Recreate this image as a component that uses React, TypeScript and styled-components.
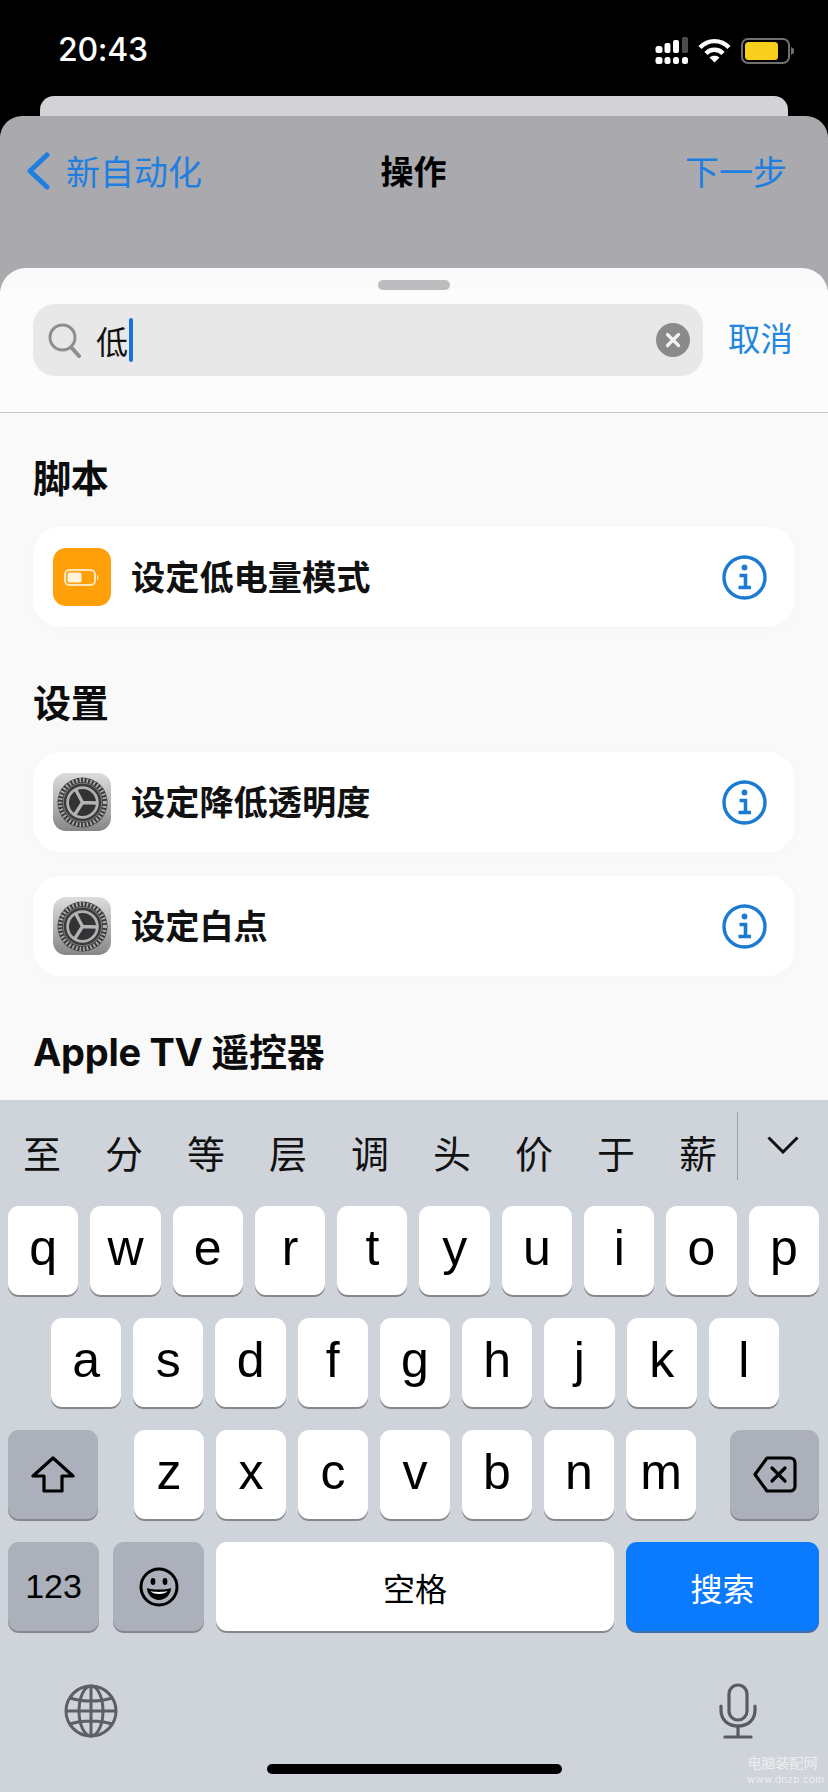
import React from 'react'
import styled, { createGlobalStyle } from 'styled-components'

const CJK = `"Noto Sans CJK SC", "Noto Sans", sans-serif`
const LATIN = `"Inter", "Liberation Sans", "Noto Sans CJK SC", sans-serif`
const KEYCAP = `"Liberation Sans", "Inter", sans-serif`

const GlobalStyle = createGlobalStyle`
  html, body { margin: 0; padding: 0; background: #000; }
  * { box-sizing: border-box; }
`

const Screen = styled.div`
  width: 828px;
  height: 1792px;
  background: #000;
  overflow: hidden;
  position: relative;
  display: flex;
  flex-direction: column;
  font-family: ${CJK};
`

const StatusBar = styled.div`
  height: 96px;
  flex: none;
  display: flex;
  align-items: flex-start;
  justify-content: space-between;
  padding: 30px 34px 0 58px;
`

const Time = styled.span`
  color: #fff;
  font-family: ${LATIN};
  font-size: 32px;
  line-height: 40px;
  font-weight: 500;
  letter-spacing: -0.3px;
`

const StatusIcons = styled.div`
  display: flex;
  align-items: center;
  margin-top: 7px;
  gap: 10px;
`

const BackCard = styled.div`
  flex: none;
  height: 20px;
  margin: 0 40px;
  background: #d2d2d7;
  border-radius: 14px 14px 0 0;
`

const GreySheet = styled.div`
  flex: none;
  height: 984px;
  background: #a9a9ae;
  border-radius: 22px 22px 0 0;
  display: flex;
  flex-direction: column;
`

const NavBar = styled.div`
  height: 152px;
  flex: none;
  display: grid;
  grid-template-columns: 264px 1fr 250px;
  align-items: start;
  padding: 30px 41px 0 26px;
  font-size: 34px;
  line-height: 50px;
`

const NavSide = styled.div<{ $end?: boolean }>`
  display: flex;
  align-items: center;
  gap: 16px;
  color: #1f7fe0;
  justify-content: ${(p) => (p.$end ? 'flex-end' : 'flex-start')};
`

const NavTitle = styled.div`
  color: #000;
  font-weight: 700;
  font-size: 33px;
  text-align: center;
  margin-top: -1px;
`

const WhiteSheet = styled.div`
  flex: 1;
  background: #fafafa;
  border-radius: 26px 26px 0 0;
  display: flex;
  flex-direction: column;
  overflow: hidden;
`

const Handle = styled.div`
  width: 72px;
  height: 10px;
  border-radius: 5px;
  background: #bcbcbe;
  margin: 12px auto 0;
  flex: none;
`

const SearchRow = styled.div`
  display: flex;
  align-items: center;
  gap: 25px;
  padding: 14px 33px 36px;
  border-bottom: 1px solid #cbcbcd;
  background: #fcfcfc;
  flex: none;
`

const SearchField = styled.div`
  width: 670px;
  height: 72px;
  background: #e8e8e9;
  border-radius: 22px;
  display: flex;
  align-items: center;
  padding: 0 13px 0 15px;
`

const SearchValue = styled.span`
  margin-left: 15px;
  font-size: 32px;
  line-height: 44px;
  color: #111;
`

const Caret = styled.span`
  width: 4px;
  height: 44px;
  margin-left: 1px;
  background: #1a73d9;
  border-radius: 2px;
  flex: none;
`

const CancelLink = styled.span`
  font-size: 32.5px;
  line-height: 44px;
  margin-top: -6px;
  color: #2486de;
  white-space: nowrap;
`

const Results = styled.div`
  flex: 1;
  padding: 45px 33px 0;
  display: flex;
  flex-direction: column;
  background: #f9f9f9;
`

const SectionTitle = styled.h2<{ $first?: boolean }>`
  margin: ${(p) => (p.$first ? '0' : '56px')} 0 29px;
  font-size: 38px;
  line-height: 40px;
  font-weight: 700;
  color: #0c0c0c;
  white-space: nowrap;
  font-family: ${LATIN};
  letter-spacing: -0.3px;
`

const ActionRow = styled.div`
  height: 100px;
  flex: none;
  background: #fff;
  border-radius: 27px;
  display: flex;
  align-items: center;
  padding: 0 28px 0 20px;
  box-shadow: 0 2px 12px rgba(0, 0, 0, 0.015);
  & + & {
    margin-top: 24px;
  }
`

const ActionLabel = styled.span`
  flex: 1;
  margin: -4px 0 0 20px;
  font-size: 34.2px;
  font-weight: 600;
  color: #111;
  white-space: nowrap;
`

const AppTile = styled.span<{ $kind: 'battery' | 'settings' }>`
  width: 58px;
  height: 58px;
  border-radius: 13px;
  flex: none;
  display: flex;
  align-items: center;
  justify-content: center;
  background: ${(p) =>
    p.$kind === 'battery' ? '#ff9f0a' : 'linear-gradient(180deg, #dcdcde 0%, #b4b4b6 50%, #868688 100%)'};
`

const Keyboard = styled.div`
  flex: none;
  height: 692px;
  background: #cfd3da;
  display: flex;
  flex-direction: column;
`

const Candidates = styled.div`
  height: 106px;
  flex: none;
  display: flex;
  align-items: center;
  padding-left: 1px;
`

const Candidate = styled.span`
  width: 82px;
  flex: none;
  text-align: center;
  font-size: 38px;
  line-height: 50px;
  margin-top: -2px;
  color: #111;
`

const CandidateDivider = styled.span`
  width: 1px;
  height: 68px;
  background: #9a9da3;
  margin: -14px 0 0 -2px;
  flex: none;
`

const CollapseButton = styled.span`
  display: flex;
  margin: -16px 0 0 29px;
`

const KeyRows = styled.div`
  display: flex;
  flex-direction: column;
  gap: 23px;
`

const KeyRow = styled.div<{ $inset?: string }>`
  display: flex;
  height: 89px;
  padding: ${(p) => p.$inset ?? '0 9px 0 8px'};
  gap: 12px;
`

const Key = styled.div<{ $tone?: 'light' | 'dark' | 'blue'; $width?: number; $lead?: number }>`
  flex: ${(p) => (p.$width ? `none` : '1 1 0')};
  width: ${(p) => (p.$width ? `${p.$width}px` : 'auto')};
  margin-left: ${(p) => p.$lead ?? 0}px;
  height: 89px;
  border-radius: 11px;
  display: flex;
  align-items: center;
  justify-content: center;
  background: ${(p) => (p.$tone === 'dark' ? '#abb0bb' : p.$tone === 'blue' ? '#0a7aff' : '#fff')};
  color: ${(p) => (p.$tone === 'blue' ? '#fff' : '#000')};
  box-shadow: 0 2px 0 ${(p) => (p.$tone === 'blue' ? '#3f6ea6' : '#85878c')};
`

const LetterCap = styled.span`
  font-family: ${KEYCAP};
  font-size: 50px;
  line-height: 60px;
  margin-top: -6px;
`

const NumberCap = styled.span`
  font-family: ${KEYCAP};
  font-size: 34px;
`

const WordCap = styled.span`
  font-size: 32px;
  line-height: 44px;
`

const BottomRow = styled.div`
  display: flex;
  align-items: center;
  justify-content: space-between;
  height: 56px;
  margin-top: 52px;
  padding: 0 71px 0 64px;
  flex: none;
`

const HomeIndicator = styled.div`
  width: 295px;
  height: 10px;
  background: #000;
  border-radius: 5px;
  margin: 25px auto 0;
  flex: none;
`

const Watermark = styled.div`
  position: absolute;
  right: 10px;
  bottom: 7px;
  width: 71px;
  text-align: center;
  color: rgba(255, 255, 255, 0.65);
  font-size: 14px;
  line-height: 16px;
  white-space: nowrap;
`

const WatermarkUrl = styled.div`
  font-family: ${LATIN};
  font-size: 10px;
  line-height: 12px;
  letter-spacing: 0.3px;
  margin-top: 3px;
`

const SignalIcon = () => (
  <svg width="34" height="27" viewBox="-1.5 0 34 27" fill="#fff">
    <rect x="0" y="9" width="7" height="7" rx="2.5" />
    <rect x="9" y="6" width="6" height="10" rx="2" />
    <rect x="17.5" y="3" width="6" height="13" rx="2" />
    <rect x="26.5" y="0" width="6" height="16" rx="1.5" fill="#4c4c4c" />
    <rect x="0" y="20" width="7" height="7" rx="2.5" />
    <rect x="9" y="20" width="6" height="7" rx="2.5" />
    <rect x="17.5" y="20" width="6" height="7" rx="2.5" />
    <rect x="26.5" y="20" width="6" height="7" rx="2.5" />
  </svg>
)

const WifiIcon = () => (
  <svg width="33" height="25" viewBox="0 0 33 25" fill="none" stroke="#fff" strokeWidth="4.4">
    <path d="M2 9.5C10 1 23 1 31 9.5" />
    <path d="M8 15.5C12.5 10.5 20.5 10.5 25 15.5" />
    <path d="M16.5 24.5L11.5 19.5C14 17 19 17 21.5 19.5Z" fill="#fff" stroke="none" />
  </svg>
)

const BatteryIcon = () => (
  <svg width="53" height="26" viewBox="0 0 53 26">
    <rect x="1" y="1" width="47" height="24" rx="6" fill="none" stroke="#6f6f6f" strokeWidth="2" />
    <rect x="4" y="4" width="33" height="18" rx="3.5" fill="#f8cf1c" />
    <path d="M50 9L53 11V15L50 17Z" fill="#6f6f6f" />
  </svg>
)

const BackChevron = () => (
  <svg width="24" height="38" viewBox="0 0 24 38" fill="none" stroke="#1f7fe0" strokeWidth="5" strokeLinecap="round" strokeLinejoin="round">
    <path d="M21 3L4 19L21 35" />
  </svg>
)

const SearchGlass = () => (
  <svg width="33" height="35" viewBox="0 0 33 35" fill="none" stroke="#8e8e91" strokeWidth="3" strokeLinecap="round">
    <circle cx="14.5" cy="14.5" r="12.5" />
    <path d="M23.5 24.5L31 33" strokeWidth="4" />
  </svg>
)

const ClearIcon = () => (
  <svg width="34" height="34" viewBox="0 0 34 34" style={{ marginLeft: 'auto' }}>
    <circle cx="17" cy="17" r="17" fill="#8a8a8c" />
    <path d="M11.5 11.5L22.5 22.5M22.5 11.5L11.5 22.5" stroke="#f2f2f2" strokeWidth="3.2" strokeLinecap="round" />
  </svg>
)

const LowPowerGlyph = () => (
  <svg width="36" height="17" viewBox="0 0 36 17">
    <rect x="1" y="1" width="30" height="15" rx="4.5" fill="none" stroke="#ffe6bd" strokeWidth="2" />
    <rect x="3.5" y="3.5" width="14" height="10" rx="2" fill="#fff3dd" />
    <path d="M33 6C35 6.5 35 10.5 33 11Z" fill="#ffe6bd" />
  </svg>
)

const GearGlyph = () => (
  <svg width="51" height="51" viewBox="0 0 52 52">
    <circle cx="26" cy="26" r="25.5" fill="#3a3a3c" />
    <circle cx="26" cy="26" r="22.8" fill="none" stroke="#aeaeb0" strokeWidth="4.2" strokeDasharray="1.7 2" />
    <circle cx="26" cy="26" r="19.6" fill="none" stroke="#77777a" strokeWidth="1.2" />
    <circle cx="26" cy="26" r="15.2" fill="#333335" stroke="#b0b0b2" strokeWidth="2.8" />
    <path d="M26 26L19 12.8M26 26L41 26.5M26 26L18 38.7" stroke="#b4b4b6" strokeWidth="3.4" />
  </svg>
)

const InfoIcon = () => (
  <svg width="45" height="45" viewBox="0 0 45 45" fill="none" stroke="#1b7ad2">
    <circle cx="22.5" cy="22.5" r="20.5" strokeWidth="3.4" />
    <circle cx="22.5" cy="12.5" r="2.9" fill="#1b7ad2" stroke="none" />
    <path d="M17.5 20.5H23.5V32.5M16.5 32.5H29" strokeWidth="3.6" />
  </svg>
)

const CollapseChevron = () => (
  <svg width="32" height="18" viewBox="0 0 32 18" fill="none" stroke="#111" strokeWidth="3">
    <path d="M1.5 1.5L16 16L30.5 1.5" />
  </svg>
)

const ShiftIcon = () => (
  <svg width="44" height="37" viewBox="0 0 44 37" fill="none" stroke="#000" strokeWidth="3.2" strokeLinejoin="round">
    <path d="M22 2L2 20H13V35H31V20H42Z" />
  </svg>
)

const DeleteIcon = () => (
  <svg width="44" height="37" viewBox="0 0 44 37" fill="none" stroke="#000" strokeWidth="3.2" strokeLinejoin="round" strokeLinecap="round">
    <path d="M14 2H37C40 2 42 4 42 7V30C42 33 40 35 37 35H14L2 18.5Z" />
    <path d="M19 12L32 25M32 12L19 25" />
  </svg>
)

const EmojiIcon = () => (
  <svg width="40" height="40" viewBox="0 0 40 40" fill="none" stroke="#000" strokeWidth="3">
    <circle cx="20" cy="20" r="18" />
    <ellipse cx="14" cy="14.5" rx="2.4" ry="3.4" fill="#000" stroke="none" />
    <ellipse cx="26" cy="14.5" rx="2.4" ry="3.4" fill="#000" stroke="none" />
    <path d="M8 21C13 23 27 23 32 21C32 28 26 33 20 33C14 33 8 28 8 21Z" fill="#000" stroke="none" />
    <path d="M11.5 24C16 25.2 24 25.2 28.5 24C27.5 26 24 27 20 27C16 27 12.5 26 11.5 24Z" fill="#fff" stroke="none" />
  </svg>
)

const GlobeIcon = () => (
  <svg width="54" height="54" viewBox="0 0 54 54" fill="none" stroke="#5c6066" strokeWidth="3">
    <circle cx="27" cy="27" r="25" />
    <ellipse cx="27" cy="27" rx="12" ry="25" />
    <path d="M27 2V52M2 27H52M6 14C18 18 36 18 48 14M6 40C18 36 36 36 48 40" />
  </svg>
)

const MicIcon = () => (
  <svg width="38" height="56" viewBox="0 0 38 56" fill="none" stroke="#585c62" strokeWidth="3.2" strokeLinecap="round">
    <rect x="10" y="2" width="18" height="35" rx="9" />
    <path d="M2 23V27C2 37 9 43 19 43C29 43 36 37 36 27V23" />
    <path d="M19 43V54M6 54H32" />
  </svg>
)

const candidates = ['至', '分', '等', '层', '调', '头', '价', '于', '薪']
const rowOne = 'qwertyuiop'.split('')
const rowTwo = 'asdfghjkl'.split('')
const rowThree = 'zxcvbnm'.split('')

const App: React.FC = () => {
  return (
    <Screen>
      <GlobalStyle />
      <StatusBar>
        <Time>20:43</Time>
        <StatusIcons>
          <SignalIcon />
          <WifiIcon />
          <BatteryIcon />
        </StatusIcons>
      </StatusBar>
      <BackCard />
      <GreySheet>
        <NavBar>
          <NavSide>
            <BackChevron />
            新自动化
          </NavSide>
          <NavTitle>操作</NavTitle>
          <NavSide $end>下一步</NavSide>
        </NavBar>
        <WhiteSheet>
          <Handle />
          <SearchRow>
            <SearchField>
              <SearchGlass />
              <SearchValue>低</SearchValue>
              <Caret />
              <ClearIcon />
            </SearchField>
            <CancelLink>取消</CancelLink>
          </SearchRow>
          <Results>
            <SectionTitle $first>脚本</SectionTitle>
            <ActionRow>
              <AppTile $kind="battery">
                <LowPowerGlyph />
              </AppTile>
              <ActionLabel>设定低电量模式</ActionLabel>
              <InfoIcon />
            </ActionRow>
            <SectionTitle>设置</SectionTitle>
            <ActionRow>
              <AppTile $kind="settings">
                <GearGlyph />
              </AppTile>
              <ActionLabel>设定降低透明度</ActionLabel>
              <InfoIcon />
            </ActionRow>
            <ActionRow>
              <AppTile $kind="settings">
                <GearGlyph />
              </AppTile>
              <ActionLabel>设定白点</ActionLabel>
              <InfoIcon />
            </ActionRow>
            <SectionTitle>Apple TV 遥控器</SectionTitle>
          </Results>
        </WhiteSheet>
      </GreySheet>
      <Keyboard>
        <Candidates>
          {candidates.map((c) => (
            <Candidate key={c}>{c}</Candidate>
          ))}
          <CandidateDivider />
          <CollapseButton>
            <CollapseChevron />
          </CollapseButton>
        </Candidates>
        <KeyRows>
          <KeyRow>
            {rowOne.map((k) => (
              <Key key={k}>
                <LetterCap>{k}</LetterCap>
              </Key>
            ))}
          </KeyRow>
          <KeyRow $inset="0 49px 0 51px">
            {rowTwo.map((k) => (
              <Key key={k}>
                <LetterCap>{k}</LetterCap>
              </Key>
            ))}
          </KeyRow>
          <KeyRow>
            <Key $tone="dark" $width={90}>
              <ShiftIcon />
            </Key>
            {rowThree.map((k, i) => (
              <Key key={k} $width={70} $lead={i === 0 ? 24 : 0}>
                <LetterCap>{k}</LetterCap>
              </Key>
            ))}
            <Key $tone="dark" $width={89} $lead={22}>
              <DeleteIcon />
            </Key>
          </KeyRow>
          <KeyRow>
            <Key $tone="dark" $width={91}>
              <NumberCap>123</NumberCap>
            </Key>
            <Key $tone="dark" $width={91} $lead={2}>
              <EmojiIcon />
            </Key>
            <Key>
              <WordCap>空格</WordCap>
            </Key>
            <Key $tone="blue" $width={193}>
              <WordCap>搜索</WordCap>
            </Key>
          </KeyRow>
        </KeyRows>
        <BottomRow>
          <GlobeIcon />
          <MicIcon />
        </BottomRow>
        <HomeIndicator />
      </Keyboard>
      <Watermark>
        电脑装配网
        <WatermarkUrl>www.dnzp.com</WatermarkUrl>
      </Watermark>
    </Screen>
  )
}

export default App
